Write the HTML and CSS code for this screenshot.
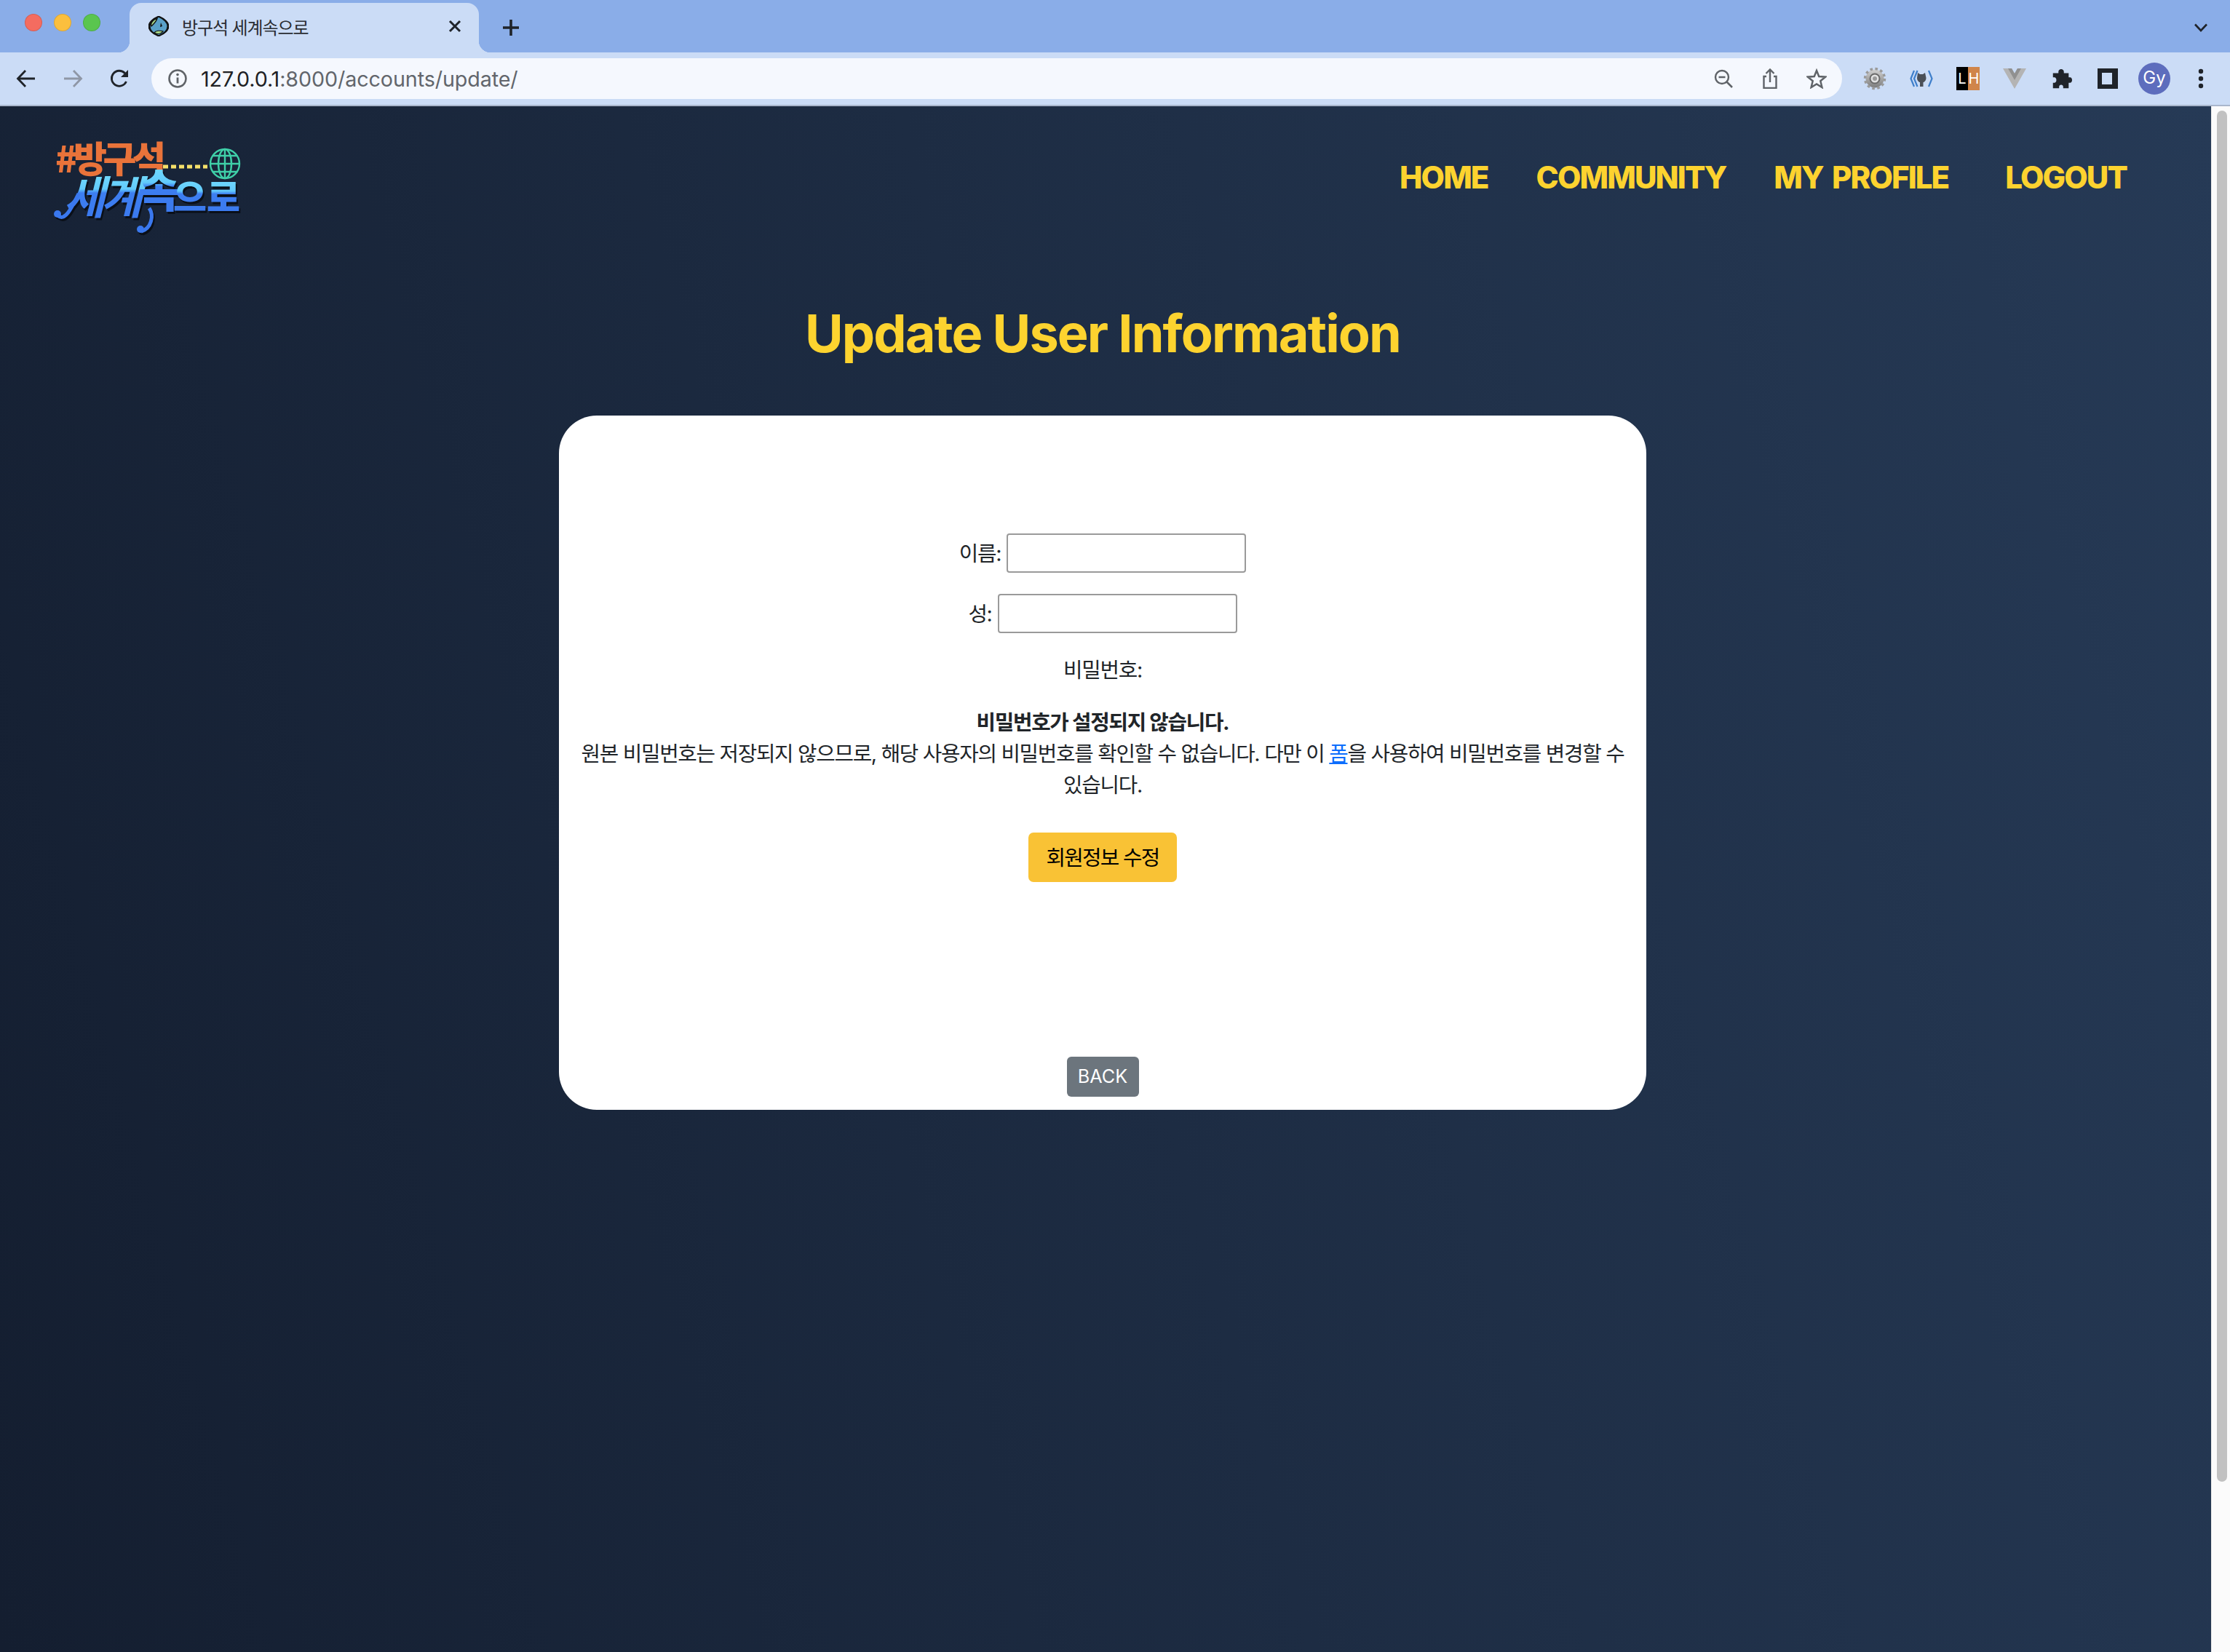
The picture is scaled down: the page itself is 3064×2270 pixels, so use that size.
FILE: index.html
```html
<!DOCTYPE html>
<html lang="ko">
<head>
<meta charset="utf-8">
<title>방구석 세계속으로</title>
<link rel="stylesheet" href="styles.css">
</head>
<body>
<div class="browser">
  <div class="tabstrip">
    <div class="traffic">
      <span class="light red"></span><span class="light yellow"></span><span class="light green"></span>
    </div>
    <div class="tab">
      <svg class="favicon" viewBox="0 0 28 44" width="28" height="28" preserveAspectRatio="none"><path d="M14 1 C22 6 27 15 27 22 C27 30 22 38 14 43 C6 38 1 30 1 22 C1 15 6 6 14 1Z" fill="#5aa0c8" stroke="#111" stroke-width="3"/><path d="M4 22 C8 16 11 12 12 5 C6 9 2 16 4 22Z M8 36 C10 31 16 31 20 33 C18 38 12 41 8 36Z" fill="#a8d888" stroke="#111" stroke-width="1.5"/><path d="M17 14 L19 22 L16 24Z" fill="#111"/></svg>
      <span class="tab-title">방구석 세계속으로</span>
      <svg class="tab-close" viewBox="0 0 18 18" width="18" height="18"><path d="M2 2 L16 16 M16 2 L2 16" stroke="#1f2329" stroke-width="3" fill="none"/></svg>
    </div>
    <svg class="newtab" viewBox="0 0 24 24" width="24" height="24"><path d="M12 1 V23 M1 12 H23" stroke="#1f2329" stroke-width="3.6" fill="none"/></svg>
    <svg class="tab-menu" viewBox="0 0 20 12" width="20" height="12"><path d="M2 1.5 L10 10 L18 1.5" stroke="#1f2329" stroke-width="2.6" fill="none"/></svg>
  </div>
  <div class="toolbar">
    <div class="navbtns">
      <svg class="navicon" viewBox="0 0 28 28" width="28" height="28"><path d="M26 14 H3 M13 3 L2.5 14 L13 25" stroke="#1f2329" stroke-width="2.8" fill="none"/></svg>
      <svg class="navicon" viewBox="0 0 28 28" width="28" height="28"><path d="M2 14 H25 M15 3 L25.5 14 L15 25" stroke="#8f97a6" stroke-width="2.8" fill="none"/></svg>
      <svg class="navicon" viewBox="0 0 28 28" width="28" height="28"><path d="M23.5 18 A10.5 10.5 0 1 1 21.5 6.5 L25 10" stroke="#1f2329" stroke-width="2.8" fill="none"/><path d="M26 2 V12 H16Z" fill="#1f2329"/></svg>
    </div>
    <div class="omnibox">
      <svg class="info" viewBox="0 0 28 28" width="28" height="28"><circle cx="14" cy="14" r="11.5" stroke="#5f6368" stroke-width="2.6" fill="none"/><path d="M14 12.5 V20.5" stroke="#5f6368" stroke-width="2.8"/><circle cx="14" cy="8.6" r="1.8" fill="#5f6368"/></svg>
      <span class="url"><span class="url-host">127.0.0.1</span>:8000/accounts/update/</span>
      <div class="omni-actions">
        <svg class="omni-icon" viewBox="0 0 28 28" width="28" height="28"><circle cx="12" cy="12" r="9" stroke="#5f6368" stroke-width="2.4" fill="none"/><path d="M7.5 12 H16.5 M18.5 18.5 L26 26" stroke="#5f6368" stroke-width="2.6" fill="none"/></svg>
        <svg class="omni-icon" viewBox="0 0 28 28" width="28" height="28"><path d="M9 11 H5.5 V27 H22.5 V11 H19 M14 19 V2 M8.5 7 L14 1.5 L19.5 7" stroke="#5f6368" stroke-width="2.4" fill="none"/></svg>
        <svg class="omni-icon" viewBox="0 0 28 28" width="28" height="28"><path d="M14 3 L17.2 11 L26 11.7 L19.3 17.3 L21.4 26 L14 21.4 L6.6 26 L8.7 17.3 L2 11.7 L10.8 11Z" stroke="#5f6368" stroke-width="2.5" fill="none"/></svg>
      </div>
    </div>
    <div class="extensions">
      <span class="ext"><svg viewBox="0 0 32 32" width="32" height="32"><defs><linearGradient id="gear" x1="0" y1="0" x2="0" y2="1"><stop offset="0" stop-color="#d2d2d2"/><stop offset="1" stop-color="#7c7c7c"/></linearGradient></defs><circle cx="16" cy="16" r="12.5" fill="url(#gear)"/><circle cx="16" cy="16" r="13.5" fill="none" stroke="#9a9a9a" stroke-width="3.4" stroke-dasharray="3.6 3.47"/><circle cx="16" cy="16" r="6.5" fill="#e2e2e2" stroke="#6a6a6a" stroke-width="2"/><circle cx="16" cy="16" r="3" fill="#9a9a9a"/></svg></span>
      <span class="ext"><svg viewBox="0 0 32 32" width="32" height="32"><path d="M6 5 L1.5 16 L6 27 M10.5 5 L6 16 L10.5 27 M26 5 L30.5 16 L26 27" stroke="#3f7fcb" stroke-width="2.2" fill="none"/><path d="M11 8 L14 10 H18 L21 8 L22.5 15 C22.5 19 19.5 21 18.5 21 V27 H14 V21 C13 21 10 19 10 15Z" fill="#4a4f57"/></svg></span>
      <span class="ext"><span class="lh"><span class="lh-l">L</span><span class="lh-h">H</span></span></span>
      <span class="ext"><svg viewBox="0 0 32 32" width="32" height="32"><path d="M0 2 H12 L16 9 L20 2 H32 L16 30Z" fill="#b4b4b4"/><path d="M7 2 H12 L16 9 L20 2 H25 L16 18Z" fill="#909090"/></svg></span>
      <span class="ext"><svg viewBox="0 0 32 32" width="30" height="30"><path d="M12 6 C12 1 20 1 20 6 V8 H27 V14 H29 C33 14 33 22 29 22 H27 V30 H19 V28 C19 24 13 24 13 28 V30 H4 V22 H6 C10 22 10 14 6 14 H4 V8 H12Z" fill="#1f2329"/></svg></span>
      <span class="ext"><span class="sidepanel"></span></span>
      <span class="ext"><span class="avatar">Gy</span></span>
      <span class="ext"><svg viewBox="0 0 8 28" width="8" height="28"><circle cx="4" cy="4" r="3.2" fill="#1f2329"/><circle cx="4" cy="14" r="3.2" fill="#1f2329"/><circle cx="4" cy="24" r="3.2" fill="#1f2329"/></svg></span>
    </div>
  </div>
  <div class="viewport">
    <main class="page">
      <header class="site-header">
        <a class="logo" href="#">
          <svg viewBox="0 -14 266 154" width="266" height="154">
            <defs>
              <linearGradient id="blue" x1="0" y1="0" x2="0" y2="1"><stop offset="0" stop-color="#7fe6ff"/><stop offset=".42" stop-color="#62cbfc"/><stop offset=".48" stop-color="#3d7ef0"/><stop offset="1" stop-color="#3a78ee"/></linearGradient>
            </defs>
            <text class="logo-top" x="4" y="49">#방구석</text>
            <path class="logo-dots" d="M152 41 H213"/>
            <g class="logo-globe">
              <circle cx="237" cy="37" r="20"/><ellipse cx="237" cy="37" rx="9" ry="20"/><path d="M237 17 V57 M217 37 H257 M220 26 H254 M220 48 H254"/>
            </g>
            <g class="logo-main" fill="url(#blue)">
              <text class="logo-big" x="20" y="106" transform="skewX(-14) translate(22 0)">세계</text>
              <text class="logo-sok" x="118" y="97">속</text>
              <text class="logo-wide" x="166" y="102">으로</text>
              <path class="logo-swoosh" d="M7 108 C18 118 28 94 36 78 M133 98 C140 108 136 126 122 130"/>
              <circle class="logo-dot" cx="7" cy="106" r="5"/>
              <circle class="logo-dot" cx="121" cy="127" r="5"/>
            </g>
          </svg>
        </a>
        <nav class="site-nav">
          <a href="#">HOME</a>
          <a href="#">COMMUNITY</a>
          <a href="#">MY PROFILE</a>
          <a class="logout" href="#">LOGOUT</a>
        </nav>
      </header>
      <h1 class="page-title">Update User Information</h1>
      <section class="card">
        <form class="update-form">
          <p class="field"><label for="first">이름:</label> <input id="first" type="text"></p>
          <p class="field"><label for="last">성:</label> <input id="last" type="text"></p>
          <p class="field"><label>비밀번호:</label></p>
          <div class="help">
            <strong>비밀번호가 설정되지 않습니다.</strong><br>
            원본 비밀번호는 저장되지 않으므로, 해당 사용자의 비밀번호를 확인할 수 없습니다. 다만 이 <a href="#">폼</a>을 사용하여 비밀번호를 변경할 수 있습니다.
          </div>
          <button class="btn-submit" type="button">회원정보 수정</button>
        </form>
        <a class="btn-back" href="#">BACK</a>
      </section>
    </main>
    <aside class="scrollbar"><span class="thumb"></span></aside>
  </div>
</div>
</body>
</html>
```

FILE: styles.css
```css
* { box-sizing: border-box; }
html, body { margin: 0; padding: 0; }
body {
  width: 3064px;
  height: 2270px;
  overflow: hidden;
  font-family: Inter, "Noto Sans CJK KR", sans-serif;
  color: #212529;
}
.browser { display: flex; flex-direction: column; height: 2270px; }

/* tab strip */
.tabstrip {
  position: relative;
  height: 72px;
  background: #8aade8;
  display: flex;
  align-items: flex-end;
}
.traffic { display: flex; gap: 16px; width: 178px; height: 72px; padding: 19px 0 0 34px; }
.light { width: 24px; height: 24px; border-radius: 50%; border: 1px solid rgba(0,0,0,.12); }
.red { background: #f46c60; }
.yellow { background: #fbbf3e; }
.green { background: #5ac54f; }
.tab {
  position: relative;
  width: 480px;
  height: 68px;
  background: #cbdcf6;
  border-radius: 16px 16px 0 0;
  display: flex;
  align-items: center;
  padding: 0 24px 4px 26px;
}
.tab::before, .tab::after {
  content: "";
  position: absolute;
  bottom: 0;
  width: 16px;
  height: 16px;
}
.tab::before { left: -16px; background: radial-gradient(circle at 0 0, transparent 16px, #cbdcf6 16.5px); }
.tab::after { right: -16px; background: radial-gradient(circle at 100% 0, transparent 16px, #cbdcf6 16.5px); }
.favicon { flex: none; }
.tab-title { margin-left: 18px; font-size: 24px; letter-spacing: -1.1px; color: #2a2d32; flex: 1; white-space: nowrap; }
.tab-close { flex: none; }
.newtab { margin: 0 0 22px 32px; }
.tab-menu { position: absolute; right: 30px; top: 32px; }

/* toolbar */
.toolbar {
  height: 74px;
  background: #cbdcf6;
  border-bottom: 2px solid #a9b6cc;
  display: flex;
  align-items: center;
  padding-right: 8px;
}
.navbtns { display: flex; width: 208px; gap: 36px; padding-left: 22px; }
.navicon { flex: none; }
.omnibox {
  width: 2323px;
  height: 56px;
  background: #f5f8fe;
  border-radius: 28px;
  display: flex;
  align-items: center;
  padding-left: 22px;
}
.info { flex: none; }
.url { margin-left: 18px; font-size: 28.7px; color: #62666c; letter-spacing: -.1px; white-space: nowrap; }
.url-host { color: #202124; }
.omni-actions { margin-left: auto; display: flex; gap: 36px; padding-right: 21px; }
.omni-icon { flex: none; }
.extensions { display: flex; margin-left: auto; }
.ext { width: 64px; height: 64px; display: flex; align-items: center; justify-content: center; }
.lh { width: 32px; height: 32px; display: flex; font-size: 20px; line-height: 32px; color: #fff; text-align: center; }
.lh-l { flex: 1; background: #000; }
.lh-h { flex: 1; background: #d0854a; }
.sidepanel { width: 28px; height: 28px; border: 6px solid #1f2329; border-right-width: 8px; background: #cbdcf6; }
.avatar {
  width: 44px; height: 44px; border-radius: 50%;
  background: #5d6dbd; color: #fff;
  font-size: 24px; line-height: 42px; text-align: center;
}

/* viewport */
.viewport { flex: 1; display: flex; min-height: 0; }
.page {
  flex: 1;
  background: linear-gradient(75deg, #141e30, #263a56);
  min-width: 0;
}
.scrollbar { width: 26px; background: #fbfbfb; border-left: 1px solid #ececec; padding: 6px 4px 0 7px; }
.thumb { display: block; height: 1884px; border-radius: 8px; background: #c1c1c1; }

/* header */
.site-header {
  height: 202px;
  display: flex;
  justify-content: space-between;
  align-items: flex-start;
  padding: 28px 116px 0 72px;
}
.logo { display: block; line-height: 0; }
.logo-top { font: 900 50px "Noto Sans CJK KR", sans-serif; fill: #e9733a; letter-spacing: -5.5px; }
.logo-dots { stroke: #f5e06a; stroke-width: 5; stroke-dasharray: 7 4; fill: none; }
.logo-globe { fill: none; stroke: #3fd0a8; stroke-width: 2.4; }
.logo-main { filter: drop-shadow(2px 3px 0 #0a0f18); }
.logo-big { font: 700 62px "Noto Sans CJK KR", sans-serif; letter-spacing: -6px; }
.logo-sok { font: 900 62px "Noto Sans CJK KR", sans-serif; }
.logo-wide { font: 900 50px "Noto Sans CJK KR", sans-serif; }
.logo-swoosh { fill: none; stroke: #3a78ee; stroke-width: 5; }
.logo-dot { fill: #3a78ee; }
.site-nav { display: flex; gap: 66px; padding-top: 44px; }
.site-nav a { color: #fdd32f; font-size: 42px; font-weight: 800; letter-spacing: -1.9px; word-spacing: 5px; text-decoration: none; line-height: 52px; white-space: nowrap; }
.site-nav .logout { margin-left: 12px; }

.page-title {
  margin: 0;
  height: 223px;
  padding-right: 8px;
  text-align: center;
  color: #fdd32f;
  font-size: 72px;
  font-weight: 700;
  letter-spacing: -1.9px;
  line-height: 220px;
}

/* card */
.card {
  width: 1494px;
  height: 954px;
  margin: 0 0 0 768px;
  background: #fff;
  border-radius: 52px;
  padding: 162px 30px 18px;
  display: flex;
  flex-direction: column;
  align-items: center;
  justify-content: space-between;
  font-size: 28.8px;
  line-height: 43px;
  letter-spacing: -1.3px;
}
.update-form { display: flex; flex-direction: column; align-items: center; text-align: center; }
.field { margin: 0 0 29px; display: flex; align-items: center; gap: 8px; }
.field input { width: 329px; height: 54px; border: 2px solid #9a9a9a; border-radius: 4px; background: #fff; padding: 0; }
.help a { color: #0d6efd; }
.help strong { font-weight: 700; }
.btn-submit {
  margin-top: 44px;
  width: 204px;
  height: 68px;
  border: 0;
  border-radius: 7px;
  background: #f9c235;
  color: #000;
  font: inherit;
  letter-spacing: -1.7px;
  padding: 0;
}
.btn-back {
  display: block;
  width: 99px;
  height: 55px;
  border-radius: 6px;
  background: #6c757d;
  color: #fff;
  font-size: 25.2px;
  line-height: 55px;
  letter-spacing: 0;
  text-align: center;
  text-decoration: none;
}
```
